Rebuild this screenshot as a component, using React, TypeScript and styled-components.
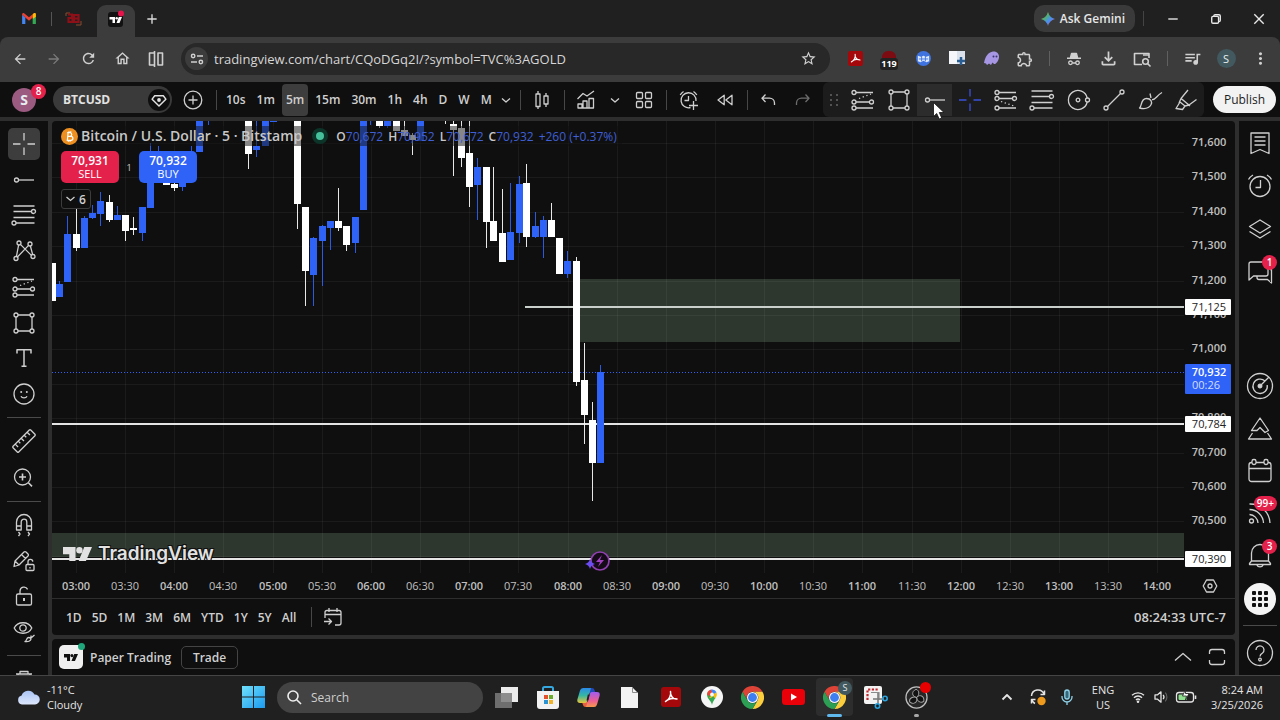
import React from "react";
import styled, { createGlobalStyle } from "styled-components";
import {
  MdAdd,
  MdArrowBack,
  MdArrowForward,
  MdMoreVert,
  MdOutlineExtension,
  MdOutlineFileDownload,
  MdOutlineHome,
  MdQueueMusic,
  MdRefresh,
  MdStarBorder,
} from "react-icons/md";

const UI = `"Open Sans", "Noto Sans", sans-serif`;
const PANEL = "#0f0f0f";
const GAP = "#2e2e2e";
const INK = "#cfcfcf";
const BLUE = "#2f62f6";
const RED = "#e3214b";

const Global = createGlobalStyle`
  * { box-sizing: border-box; }
  html, body { margin: 0; background: ${PANEL}; }
  body { font-family: ${UI}; font-size: 12px; color: ${INK}; }
  button, input { font: inherit; color: inherit; border: 0; padding: 0; margin: 0; background: none; outline: 0; }
  button { cursor: pointer; display: flex; align-items: center; justify-content: center; }
  svg { display: block; flex: none; }
`;

const Shell = styled.div`
  height: 100vh;
  display: flex;
  flex-direction: column;
  overflow: hidden;
`;

/* ---------- icon base: coordinates are measured from the centre ---------- */

const Stroke = styled.svg`
  fill: none;
  stroke: currentColor;
  stroke-width: 1.3;
  stroke-linecap: butt;
  stroke-linejoin: round;
  overflow: visible;
`;

function Icon({ size = 28, children }: { size?: number; children: React.ReactNode }) {
  return (
    <Stroke width={size} height={size} viewBox="-14 -14 28 28" aria-hidden="true">
      {children}
    </Stroke>
  );
}

const Node = ({ x, y }: { x: number; y: number }) => <circle cx={x} cy={y} r="2" />;

const CrossIcon = () => (
  <Icon>
    <path d="M0 -11V-3.5M0 3.5V11M-11 0H-3.5M3.5 0H11" />
  </Icon>
);
const RayIcon = () => (
  <Icon>
    <Node x={-7.5} y={0} />
    <path d="M-5.5 0H10" />
  </Icon>
);
const FibIcon = () => (
  <Icon>
    <path d="M-10.5 -9H10.5M-10.5 -3.5H7.5M-10.5 2.5H10.5M-8 8H10.5" />
    <Node x={9.5} y={-3.5} />
    <Node x={-10} y={8} />
  </Icon>
);
const PatternIcon = () => (
  <Icon>
    <path d="M-5.4 -6 -7.6 5.6M-3.6 -6.6 7.4 4.4M4.6 -5.6 -6.6 6M6.4 -5 8.6 3.4" />
    <Node x={-5} y={-8} />
    <Node x={6} y={-7} />
    <Node x={-8} y={7.5} />
    <Node x={9} y={5.5} />
  </Icon>
);
const LongIcon = () => (
  <Icon>
    <Node x={-9} y={-7.5} />
    <Node x={-9} y={2} />
    <Node x={8.5} y={2} />
    <Node x={-9} y={8} />
    <path d="M-7 -7.5H10M-7 2H6.5M-7 8H10" />
    <path d="M-4 -1.5 8 -6" strokeDasharray="1.3 2.6" />
  </Icon>
);
const ShortIcon = () => (
  <Icon>
    <Node x={-9} y={-7.5} />
    <Node x={-9} y={-1.5} />
    <Node x={8.5} y={-1.5} />
    <Node x={-9} y={8} />
    <path d="M-7 -7.5H10M-7 -1.5H6.5M-7 8H10" />
    <path d="M-5 1.5 8 6" strokeDasharray="1.3 2.6" />
  </Icon>
);
const RectIcon = () => (
  <Icon>
    <Node x={-8} y={-8} />
    <Node x={8} y={-8} />
    <Node x={-8} y={8} />
    <Node x={8} y={8} />
    <path d="M-6 -8H6M-6 8H6M-8 -6V6M8 -6V6" />
  </Icon>
);
const TextIcon = () => (
  <Icon>
    <path strokeWidth="1.5" d="M-7 -4.5V-8.3H7V-4.5M0 -8.3V8.3M-2.5 8.3H2.5" />
  </Icon>
);
const SmileIcon = () => (
  <Icon>
    <circle r="10" />
    <path d="M-3 2.2A3.2 2.6 0 0 0 3 2.2" />
    <circle cx="-2.8" cy="-2" r="1" fill="currentColor" stroke="none" />
    <circle cx="2.8" cy="-2" r="1" fill="currentColor" stroke="none" />
  </Icon>
);
const RulerIcon = () => (
  <Icon>
    <g transform="rotate(-45)">
      <rect x="-12.5" y="-4" width="25" height="8" rx="1" />
      <path d="M-8.4 -4V0M-4.2 -4V-1M0 -4V0M4.2 -4V-1M8.4 -4V0" />
    </g>
  </Icon>
);
const ZoomIcon = () => (
  <Icon>
    <circle cx="-1.5" cy="-1" r="8" />
    <path d="M-5 -1H2M-1.5 -4.5V2.5M4.4 4.8 8 8.4" strokeWidth="1.6" />
  </Icon>
);
const MagnetIcon = () => (
  <Icon>
    <path d="M-7.5 5V-3A7.5 7.5 0 0 1 7.5 -3V5H2.8V-3A2.8 2.8 0 0 0 -2.8 -3V5ZM-7.5 1H-2.8M2.8 1H7.5M-5.5 7 -4 9 -5.5 11M4 7 5.5 9 4 11" />
  </Icon>
);
const PencilLockIcon = () => (
  <Icon>
    <path d="M-10 5.5 -9 0 0 -9A1.4 1.4 0 0 1 2 -9L4 -7A1.4 1.4 0 0 1 4 -5L-5 4ZM-2.5 -6.5 1.5 -2.5M-9 0 -5 4" />
    <rect x="2" y="3.5" width="8" height="6" rx="1" />
    <path d="M4 3.5V1A2.4 2.4 0 0 1 8.8 .6M6 6V7.5" />
  </Icon>
);
const LockIcon = () => (
  <Icon>
    <rect x="-7.5" y="-2" width="15" height="11" rx="1.6" />
    <path d="M-4 -2V-5A4 4 0 0 1 3.6 -6.6" />
    <path d="M0 2V5" strokeWidth="2" />
  </Icon>
);
const EyeIcon = () => (
  <Icon>
    <path d="M-9.8 -4C-6.5 -11 4.5 -11 7.8 -4C4.5 3 -6.5 3 -9.8 -4Z" />
    <circle cx="-1" cy="-4" r="3.2" />
    <path d="M1 9.5C3 9.5 2 5.5 4.5 5.5C6.5 5.5 7.5 7 6.5 8.2C5.5 9.5 3 9.8 1 9.5ZM7 6 10.5 3M7 6V3.6" />
  </Icon>
);
const TrashIcon = () => (
  <Icon>
    <path d="M-8 -5H8M-4 -5V-7.5H4V-5M-6 -5 -5 9H5L6 -5" />
  </Icon>
);
const ChevronIcon = () => (
  <Icon>
    <path d="M-4 -1.5 0 2 4 -1.5" />
  </Icon>
);
const PlusCircleIcon = () => (
  <Icon>
    <circle r="8.8" />
    <path d="M-4.5 0H4.5M0 -4.5V4.5" />
  </Icon>
);
const CandlesIcon = () => (
  <Icon>
    <rect x="-6" y="-6" width="4" height="12.5" />
    <path d="M-4 -9V-6M-4 6.5V9" />
    <rect x="2" y="-4" width="4" height="8" />
    <path d="M4 -7V-4M4 4V7" />
  </Icon>
);
const IndicatorIcon = () => (
  <Icon>
    <path d="M-8.5 -1 -3 -6.5 1 -4 8 -9" />
    <path d="M-8 8V4H-4V8ZM-3 8V1H1V8ZM3 8V-1.5H7.5V8ZM-4 8H4" />
  </Icon>
);
const GridIcon = () => (
  <Icon>
    <rect x="-7.5" y="-7.5" width="6" height="6" rx="1" />
    <rect x="1.5" y="-7.5" width="6" height="6" rx="1" />
    <rect x="-7.5" y="1.5" width="6" height="6" rx="1" />
    <rect x="1.5" y="1.5" width="6" height="6" rx="1" />
  </Icon>
);
const AlertIcon = () => (
  <Icon>
    <path d="M1.5 7.5A7.5 7.5 0 1 1 7 1M-.5 -4V.5H-4.5M-8.8 -5A10 10 0 0 1 -5.5 -8.5M4.5 -8.5A10 10 0 0 1 7.8 -5M0 5.5H9M4.5 1V10" />
  </Icon>
);
const RewindIcon = () => (
  <Icon>
    <path d="M-.8 -4.8V4.8L-7 0ZM7 -4.8V4.8L.8 0Z" />
  </Icon>
);
const UndoIcon = ({ flip = false }: { flip?: boolean }) => (
  <Icon>
    <path
      transform={flip ? "scale(-1 1)" : undefined}
      d="M-2.5 -5.5 -6 -1.8 -2.5 2M-6 -1.8H1.5A5 5 0 0 1 6.5 3V5"
    />
  </Icon>
);
const GripIcon = () => (
  <Icon>
    <g fill="currentColor" stroke="none">
      {[-5, 0, 5].map((y) => (
        <React.Fragment key={y}>
          <circle cx="-3" cy={y} r=".9" />
          <circle cx="3" cy={y} r=".9" />
        </React.Fragment>
      ))}
    </g>
  </Icon>
);
const OrbitIcon = () => (
  <Icon>
    <path d="M9.2 -2A9.5 9.5 0 1 0 9.2 2" />
    <circle r="1.8" />
    <Node x={9.5} y={0} />
  </Icon>
);
const TrendIcon = () => (
  <Icon>
    <path d="M-6.5 6.5 6.5 -6.5" />
    <Node x={-8} y={8} />
    <Node x={8} y={-8} />
  </Icon>
);
const BrushIcon = () => (
  <Icon>
    <path d="M-10.5 8C-8 6.5 -9.5 -1.5 -3.5 -1.5C1 -1.5 2.5 2 1 4.8C-1 8.5 -6 9 -10.5 8ZM1 -2 0 -6.5M2 -.5C6 0 6 -4 12 -7.5" />
  </Icon>
);
const HighlighterIcon = () => (
  <Icon>
    <path d="M-10 8.5 -6 2 -1 6 -3.5 9.5ZM-7 3 -5 -1.5 3 5 -1 6M-5 -1.5 2 -10M3 5 10.5 -.5M-3 0 4 6" />
  </Icon>
);
const GoToIcon = () => (
  <Icon>
    <path d="M-8 1V-4.5A2 2 0 0 1 -6 -6.5H6A2 2 0 0 1 8 -4.5V6A2 2 0 0 1 6 8H2M-8 -2.5H8M-4 -9V-5M4 -9V-5M-9 4.5H-2M-4.5 1.5 -1.5 4.5 -4.5 7.5" />
  </Icon>
);
const HexIcon = () => (
  <Icon>
    <path d="M-6.8 0 -3.5 -6H3.5L6.8 0 3.5 6H-3.5Z" />
    <circle r="2" />
  </Icon>
);
const WideChevronIcon = () => (
  <Icon>
    <path d="M-8 3.5 0 -3.5 8 3.5" />
  </Icon>
);
const ExpandIcon = () => (
  <Icon>
    <path d="M-7.5 -3V-5A2.5 2.5 0 0 1 -5 -7.5H5A2.5 2.5 0 0 1 7.5 -5V-3M-7.5 3V5A2.5 2.5 0 0 0 -5 7.5H5A2.5 2.5 0 0 0 7.5 5V3" />
  </Icon>
);
const WatchlistIcon = () => (
  <Icon>
    <path d="M-9 -10H9V10.5L0 6.5 -9 10.5ZM-5.5 -6H5.5M-5.5 -2H5.5M-5.5 2H5.5" />
  </Icon>
);
const AlarmIcon = () => (
  <Icon>
    <circle r="10" cy=".5" />
    <path d="M.5 -6V1.5H-4.5M-11.5 -6.5A13 13 0 0 1 -7 -11M7 -11A13 13 0 0 1 11.5 -6.5" />
  </Icon>
);
const LayersIcon = () => (
  <Icon>
    <path d="M0 -9 10.5 -2.5 0 4 -10.5 -2.5ZM-10.5 2.5 0 9 10.5 2.5" />
  </Icon>
);
const ChatIcon = () => (
  <Icon>
    <path d="M-11 8V-8A2 2 0 0 1 -9 -10H6A2 2 0 0 1 8 -8V2A2 2 0 0 1 6 4H-6.5ZM10 -2.5H11.5V11L7.5 7.5H-1A2 2 0 0 1 -3 5.5V4" />
  </Icon>
);
const ScreenerIcon = () => (
  <Icon>
    <circle r="12.5" />
    <path d="M5 -5A7.2 7.2 0 1 0 7.2 -1M9 -9 0 0" />
    <circle r="1.8" fill="currentColor" />
  </Icon>
);
const PineIcon = () => (
  <Icon>
    <path d="M0 -11 8.5 1.5 5 3.5 0 -1.5 -3 1.5 -8.5 1.5ZM-7.5 4 -11.5 10H11.5L7.5 4" />
  </Icon>
);
const CalendarIcon = () => (
  <Icon>
    <path d="M-8 -8.5H-8.5A2.5 2.5 0 0 0 -11 -6V8A2.5 2.5 0 0 0 -8.5 10.5H8.5A2.5 2.5 0 0 0 11 8V-6A2.5 2.5 0 0 0 8.5 -8.5H8M-4 -8.5H4M-11 -2.5H11" />
    <rect x="-8" y="-11.5" width="4" height="5" rx="1.8" />
    <rect x="4" y="-11.5" width="4" height="5" rx="1.8" />
  </Icon>
);
const StreamIcon = () => (
  <Icon>
    <circle cx="-8.5" cy="7" r="2" />
    <path d="M-10.5 .5A9 9 0 0 1 -2 9M-10.5 -4.5A14 14 0 0 1 3.5 9M-10.5 -10A20 20 0 0 1 10 9" />
  </Icon>
);
const BellIcon = () => (
  <Icon>
    <path d="M-8.5 5V-3A8.5 8.5 0 0 1 8.5 -3V5M-8.5 5H8.5L10.5 7.5V8.5H-10.5V7.5ZM-3.5 8.5A3.8 3.8 0 0 0 3.5 8.5" />
  </Icon>
);
const HelpIcon = () => (
  <Icon>
    <circle r="12.5" />
    <path d="M-4 -3A4 4 0 1 1 2.5 0Q0 1.5 0 3.5" />
    <circle cy="6.5" r="1.3" />
  </Icon>
);

const TvMark = ({ size, color }: { size: number; color: string }) => (
  <svg width={size} height={size / 2} viewBox="0 0 30 15" aria-hidden="true">
    <path fill={color} d="M0 0H13V15H6.5V7.5H0ZM22 0H30L23.5 15H16Z" />
    <circle fill={color} cx="17" cy="3.4" r="3.3" />
  </svg>
);

/* ---------- browser tab strip ---------- */

const TabStrip = styled.header`
  flex: none;
  height: 37px;
  display: flex;
  align-items: center;
  padding-left: 12px;
  background: #202020;
`;
const Tab = styled.button<{ $active?: boolean }>`
  width: ${(p) => (p.$active ? 38 : 34)}px;
  height: ${(p) => (p.$active ? 32 : 28)}px;
  align-self: ${(p) => (p.$active ? "flex-end" : "center")};
  border-radius: ${(p) => (p.$active ? "9px 9px 0 0" : "8px")};
  background: ${(p) => (p.$active ? "#3c3c3c" : "none")};
  padding-bottom: ${(p) => (p.$active ? 5 : 0)}px;
`;
const Rule = styled.span<{ $h: number; $w?: number; $c?: string }>`
  flex: none;
  width: ${(p) => p.$w ?? 9}px;
  height: ${(p) => p.$h}px;
  background: linear-gradient(${(p) => p.$c ?? "#474747"}, ${(p) => p.$c ?? "#474747"}) center / 1px 100% no-repeat;
`;
const Grow = styled.span`
  flex: 1;
`;
const GeminiButton = styled.button`
  height: 27px;
  padding: 0 10px 0 7px;
  gap: 5px;
  border-radius: 10px;
  background: #3a3a3a;
  color: #e6e6e6;
  font-weight: 600;
`;
const WindowButton = styled.button`
  width: 43px;
  height: 37px;
  color: #e8e8e8;
`;

function BrowserTabs() {
  return (
    <TabStrip>
      <Tab aria-label="Gmail">
        <svg width="14" height="11" viewBox="0 0 15 12">
          <path d="M0 2V12H3.5V5Z" fill="#4285f4" />
          <path d="M15 2V12H11.5V5Z" fill="#34a853" />
          <path d="M0 1.5C0 0 1.5 -.5 2.5 .5L7.500 4.500 12.500 .5C13.500 -.5 15 0 15 1.500V2L7.500 8.500 0 2Z" fill="#ea4335" />
          <path d="M11.700 1.200 13 .2C14 -.4 15 .3 15 1.500V4.200L11.700 6.500Z" fill="#fbbc04" />
        </svg>
      </Tab>
      <Rule $h={14} $w={10} $c="#555" />
      <Tab aria-label="Pinned tab">
        <svg width="17" height="14" viewBox="0 0 17 14" fill="none">
          <path d="M1 4V1H5M16 9V13H11" stroke="#8a4a2c" />
          <path d="M3 2.500H7V6H3.500V10H7.500V6M9 2V10H13.500V3H9M9 6.500H13" stroke="#8d1018" strokeWidth="2.200" />
        </svg>
      </Tab>
      <Rule $h={1} $w={7} $c="transparent" />
      <Tab $active aria-label="TradingView tab">
        <svg width="18" height="18" viewBox="0 0 18 18">
          <rect x="1" y="2" width="15" height="15" rx="3" fill="#111" />
          <path fill="#fff" d="M2.500 7H8V13H5.500V9.500H2.500ZM11.800 7H15L12.500 13H9.500Z" />
          <circle cx="9.700" cy="8.200" r="1.200" fill="#fff" />
          <circle cx="14" cy="3.500" r="3" fill="#e6144b" />
        </svg>
      </Tab>
      <Tab aria-label="New tab">
        <MdAdd size={16} color="#ddd" />
      </Tab>
      <Grow />
      <GeminiButton>
        <svg width="14" height="14" viewBox="0 0 14 14" aria-hidden="true">
          <defs>
            <linearGradient id="gem" x1="0" y1="0" x2="1" y2="1">
              <stop offset="0" stopColor="#f4b63f" />
              <stop offset=".35" stopColor="#4fae74" />
              <stop offset=".6" stopColor="#4a8df8" />
              <stop offset="1" stopColor="#e05563" />
            </linearGradient>
          </defs>
          <path fill="url(#gem)" d="M7 0Q8.500 5.500 14 7 8.500 8.500 7 14 5.500 8.500 0 7 5.500 5.500 7 0Z" />
        </svg>
        Ask Gemini
      </GeminiButton>
      <Rule $h={15} $w={16} $c="#444" />
      <WindowButton aria-label="Minimize">
        <Icon size={24}><path strokeWidth="1.600" d="M-5.500 0H5.500" /></Icon>
      </WindowButton>
      <WindowButton aria-label="Restore">
        <Icon size={24}>
          <g strokeWidth="1.600">
            <rect x="-5" y="-3" width="8" height="8" rx="1.500" />
            <path d="M-2.500 -3V-3.500A1.500 1.500 0 0 1 -1 -5H3.500A1.500 1.500 0 0 1 5 -3.500V1.500A1.500 1.500 0 0 1 3.500 3H3" />
          </g>
        </Icon>
      </WindowButton>
      <WindowButton aria-label="Close">
        <Icon size={24}><path strokeWidth="1.600" d="M-5.500 -5.500 5.500 5.500M5.500 -5.500 -5.500 5.500" /></Icon>
      </WindowButton>
    </TabStrip>
  );
}

/* ---------- address bar ---------- */

const AddressRow = styled.div`
  flex: none;
  background: #202020;
`;
const AddressInner = styled.div`
  height: 45px;
  display: flex;
  align-items: center;
  padding: 0 3px 2px;
  border-radius: 8px 8px 0 0;
  background: #3c3c3c;
`;
const NavButton = styled.button<{ $dim?: boolean }>`
  flex: none;
  width: 34px;
  height: 34px;
  color: ${(p) => (p.$dim ? "#7b7b7b" : "#d0d0d0")};
`;
const Omnibox = styled.div`
  flex: 1;
  height: 32px;
  margin: 0 8px;
  padding: 0 5px 0 4px;
  display: flex;
  align-items: center;
  border-radius: 16px;
  background: #282828;
`;
const SiteInfo = styled.button`
  width: 23px;
  height: 23px;
  border-radius: 50%;
  background: #3c3c3c;
`;
const UrlInput = styled.input`
  flex: 1;
  min-width: 0;
  margin-left: 6px;
  font-size: 13px;
  color: #d6d6d6;
`;
const Avatar = styled.span<{ $size: number; $bg: string }>`
  width: ${(p) => p.$size}px;
  height: ${(p) => p.$size}px;
  border-radius: 50%;
  display: flex;
  align-items: center;
  justify-content: center;
  background: ${(p) => p.$bg};
  color: #e6eef0;
  font-size: ${(p) => (p.$size > 20 ? 14 : 11)}px;
  font-weight: ${(p) => (p.$size > 20 ? 700 : 400)};
`;
const BlockerBadge = styled.span`
  margin-top: 10px;
  padding: 0 1px;
  border-radius: 3px;
  background: #222;
  color: #fff;
  font-size: 9px;
  line-height: 12px;
  font-weight: 700;
`;
const BlockerCap = styled.span`
  position: absolute;
  top: 9px;
  left: 10px;
  width: 14px;
  height: 7px;
  border-radius: 6px 6px 0 0;
  background: #7d0b12;
`;
const BlockerButton = styled(NavButton)`
  position: relative;
`;

const PdfGlyph = ({ size }: { size: number }) => (
  <svg width={size} height={size} viewBox="0 0 20 20" aria-hidden="true">
    <rect width="20" height="20" rx="3" fill="#a5080b" />
    <path
      d="M4.500 14.500C8 13 10.500 8 9.500 4.500C9 8.500 12 12.500 16 12C12 10.500 7 12 4.500 14.500Z"
      fill="none"
      stroke="#fff"
      strokeWidth="1.500"
      strokeLinejoin="round"
    />
  </svg>
);

function AddressBar() {
  return (
    <AddressRow>
      <AddressInner>
        <NavButton aria-label="Back"><MdArrowBack size={16} /></NavButton>
        <NavButton $dim aria-label="Forward"><MdArrowForward size={16} /></NavButton>
        <NavButton aria-label="Reload"><MdRefresh size={17} /></NavButton>
        <NavButton aria-label="Home"><MdOutlineHome size={17} /></NavButton>
        <NavButton aria-label="Split view">
          <Icon><path strokeWidth="1.600" d="M-2 -6H-6.500V6H-2M2 -6H6.500V6H2ZM-1.500 -8V8" /></Icon>
        </NavButton>
        <Omnibox>
          <SiteInfo aria-label="Site information">
            <Icon size={24}>
              <g strokeWidth="1.700">
                <circle cx="-4.500" cy="-3.500" r="2" />
                <path d="M0 -3.500H7M-7 3.500H0" />
                <circle cx="4.500" cy="3.500" r="2" />
              </g>
            </Icon>
          </SiteInfo>
          <UrlInput aria-label="Address" defaultValue="tradingview.com/chart/CQoDGq2I/?symbol=TVC%3AGOLD" />
          <NavButton aria-label="Bookmark"><MdStarBorder size={17} /></NavButton>
        </Omnibox>
        <NavButton aria-label="Acrobat"><PdfGlyph size={15} /></NavButton>
        <BlockerButton aria-label="Blocker">
          <BlockerCap />
          <BlockerBadge>119</BlockerBadge>
        </BlockerButton>
        <NavButton aria-label="Blue extension">
          <svg width="15" height="15" viewBox="0 0 16 16">
            <circle cx="8" cy="8" r="8" fill="#3f74e0" />
            <path d="M2 5 5 6 8 5 11 6 14 5V11L11 12 8 10.500 5 12 2 11Z" fill="#dfe9ff" />
            <path d="M3 8.500H13M6 5V11M10 5V11" stroke="#3f74e0" />
          </svg>
        </NavButton>
        <NavButton aria-label="Capture">
          <svg width="17" height="15" viewBox="0 0 17 15">
            <rect width="16" height="13" fill="#f4f6fa" />
            <path d="M8 0H16V13H8Z" fill="#dbe2ec" />
            <path d="M12 6V14M8 10H16" stroke="#2b5f93" strokeWidth="2.500" />
          </svg>
        </NavButton>
        <NavButton aria-label="Ghost">
          <svg width="17" height="15" viewBox="0 0 17 15">
            <path d="M1 12C2 6 5 1 10 .5C14 .2 16.500 3 16 6.500C15.500 10 13 13.500 11 13L9.500 11.500 8 14 6 12.500 4 14 3 12.500Z" fill="#a796e4" />
            <circle cx="10.500" cy="5.500" r="1" fill="#3c3470" />
            <circle cx="13.500" cy="5.500" r="1" fill="#3c3470" />
          </svg>
        </NavButton>
        <NavButton aria-label="Extensions"><MdOutlineExtension size={18} /></NavButton>
        <Rule $h={15} $w={15} $c="#606060" />
        <NavButton aria-label="Incognito">
          <Icon>
            <path fill="currentColor" d="M-3.500 -1.500 -2.500 -5.500H2.500L3.500 -1.500Z" />
            <path strokeWidth="1.600" d="M-7 -.8H7M-1.500 4H1.500" />
            <circle cx="-3.500" cy="3.800" r="1.800" />
            <circle cx="3.500" cy="3.800" r="1.800" />
          </Icon>
        </NavButton>
        <NavButton aria-label="Downloads"><MdOutlineFileDownload size={21} /></NavButton>
        <NavButton aria-label="Page search">
          <Icon>
            <g strokeWidth="1.600">
              <path d="M0 5.500H-7.500V-5.500H7V-1" />
              <circle cx="3.500" cy="2.500" r="2.800" />
              <path d="M5.500 4.500 8.500 7.500M1 -4H7" />
            </g>
          </Icon>
        </NavButton>
        <Rule $h={15} $w={16} $c="#606060" />
        <NavButton aria-label="Media"><MdQueueMusic size={19} /></NavButton>
        <NavButton aria-label="Profile"><Avatar $size={19} $bg="#41595f">S</Avatar></NavButton>
        <NavButton aria-label="Menu"><MdMoreVert size={19} /></NavButton>
      </AddressInner>
    </AddressRow>
  );
}

/* ---------- chart toolbar ---------- */

const Toolbar = styled.div`
  flex: none;
  height: 35px;
  display: flex;
  align-items: center;
  padding-left: 12px;
  background: ${PANEL};
`;
const UserButton = styled.button`
  position: relative;
  flex: none;
  margin-right: 17px;
`;
const Badge = styled.span<{ $top: number; $right: number }>`
  position: absolute;
  top: ${(p) => p.$top}px;
  right: ${(p) => p.$right}px;
  min-width: 15px;
  height: 15px;
  padding: 0 3px;
  border-radius: 8px;
  background: ${RED};
  color: #fff;
  font-size: 10px;
  line-height: 15px;
  font-weight: 600;
  text-align: center;
`;
const SymbolButton = styled.button`
  flex: none;
  width: 119px;
  height: 27px;
  margin-right: 2px;
  padding: 0 2px 0 10px;
  justify-content: space-between;
  border-radius: 14px;
  background: #3a3a3a;
  color: #e2e2e2;
  font-weight: 700;
`;
const SymbolMark = styled.span`
  width: 22px;
  height: 22px;
  border-radius: 50%;
  display: flex;
  align-items: center;
  justify-content: center;
  background: ${PANEL};
`;
const Tool = styled.button<{ $w: number; $dim?: boolean }>`
  flex: none;
  width: ${(p) => p.$w}px;
  height: 32px;
  color: ${(p) => (p.$dim ? "#6d6d6d" : INK)};
`;
const Frames = styled.div`
  display: flex;
  gap: 3px;
  margin-left: 1px;
`;
const FrameButton = styled.button<{ $active?: boolean }>`
  height: 32px;
  padding: 0 4px;
  border-radius: 4px;
  background: ${(p) => (p.$active ? "#3d3d3d" : "none")};
  font-weight: 600;
`;
const Favourites = styled.div`
  flex: 1;
  height: 35px;
  margin-left: 2px;
  display: flex;
  align-items: center;
  border-radius: 6px;
  background: #1c1c1c;
`;
const FavButton = styled.button<{ $active?: boolean; $color?: string }>`
  position: relative;
  flex: 1;
  height: 32px;
  background: ${(p) => (p.$active ? "#2c2c2c" : "none")};
  color: ${(p) => p.$color ?? INK};
`;
const Pointer = styled.svg`
  position: absolute;
  z-index: 5;
  left: 16px;
  top: 18px;
`;
const PublishButton = styled.button`
  flex: none;
  height: 27px;
  margin: 0 4px 0 9px;
  padding: 0 11px;
  border-radius: 14px;
  background: #f2f2f2;
  color: #1c1c1c;
  font-weight: 500;
`;

const frames = ["10s", "1m", "5m", "15m", "30m", "1h", "4h", "D", "W", "M"];

function ChartToolbar() {
  return (
    <Toolbar>
      <UserButton aria-label="Account">
        <Avatar $size={24} $bg="#9b5a80">S</Avatar>
        <Badge $top={-4} $right={-10}>8</Badge>
      </UserButton>
      <SymbolButton>
        BTCUSD
        <SymbolMark>
          <Icon size={24}>
            <path strokeWidth="1.700" d="M-5 -5H5L8 -1 0 7 -8 -1Z" />
            <circle cy="0" r="2.200" fill="currentColor" stroke="none" />
          </Icon>
        </SymbolMark>
      </SymbolButton>
      <Tool $w={38} aria-label="Compare"><PlusCircleIcon /></Tool>
      <Rule $h={20} />
      <Frames>
        {frames.map((f) => (
          <FrameButton key={f} $active={f === "5m"}>{f}</FrameButton>
        ))}
      </Frames>
      <Tool $w={20} aria-label="More intervals"><ChevronIcon /></Tool>
      <Rule $h={20} />
      <Tool $w={35} aria-label="Chart type"><CandlesIcon /></Tool>
      <Rule $h={20} />
      <Tool $w={35} aria-label="Indicators"><IndicatorIcon /></Tool>
      <Tool $w={22} aria-label="Indicator templates"><ChevronIcon /></Tool>
      <Tool $w={36} aria-label="Layouts"><GridIcon /></Tool>
      <Rule $h={20} />
      <Tool $w={36} aria-label="Create alert"><AlertIcon /></Tool>
      <Tool $w={36} aria-label="Replay"><RewindIcon /></Tool>
      <Rule $h={20} />
      <Tool $w={33} aria-label="Undo"><UndoIcon /></Tool>
      <Tool $w={36} $dim aria-label="Redo"><UndoIcon flip /></Tool>
      <Favourites>
        <Tool $w={22} $dim aria-label="Move toolbar"><GripIcon /></Tool>
        <FavButton aria-label="Long position"><LongIcon /></FavButton>
        <FavButton aria-label="Rectangle"><RectIcon /></FavButton>
        <FavButton $active aria-label="Horizontal ray">
          <RayIcon />
          <Pointer width="12" height="18" viewBox="0 0 12 18" aria-hidden="true">
            <path d="M.5 .5V14.500L3.700 11.500 6.200 17 8.700 16 6.300 10.500H11Z" fill="#fff" stroke="#111" strokeWidth=".8" />
          </Pointer>
        </FavButton>
        <FavButton $color="#3a50d8" aria-label="Cross line"><CrossIcon /></FavButton>
        <FavButton aria-label="Short position"><ShortIcon /></FavButton>
        <FavButton aria-label="Fib retracement"><FibIcon /></FavButton>
        <FavButton aria-label="Circle"><OrbitIcon /></FavButton>
        <FavButton aria-label="Trend line"><TrendIcon /></FavButton>
        <FavButton aria-label="Brush"><BrushIcon /></FavButton>
        <FavButton aria-label="Highlighter"><HighlighterIcon /></FavButton>
      </Favourites>
      <PublishButton>Publish</PublishButton>
    </Toolbar>
  );
}

/* ---------- side rails ---------- */

const Workspace = styled.main`
  flex: 1;
  min-height: 0;
  display: flex;
  gap: 4px;
  padding-top: 4px;
  background: ${GAP};
`;
const Rail = styled.nav<{ $w: number }>`
  flex: none;
  width: ${(p) => p.$w}px;
  display: flex;
  flex-direction: column;
  overflow: hidden;
  background: ${PANEL};
`;
const RailGroup = styled.div<{ $h: number }>`
  flex: none;
  height: ${(p) => p.$h}px;
  display: flex;
  flex-direction: column;
`;
const RailSpace = styled.div<{ $h: number }>`
  flex: none;
  height: ${(p) => p.$h}px;
`;
const RailButton = styled.button`
  flex: 1;
  position: relative;
  width: 100%;
`;
const RailTool = styled.span<{ $active?: boolean }>`
  width: 32px;
  height: 32px;
  display: flex;
  align-items: center;
  justify-content: center;
  border-radius: 5px;
  background: ${(p) => (p.$active ? "#3d3d3d" : "none")};
`;
const RailRule = styled.hr`
  flex: none;
  width: 34px;
  height: 1px;
  margin: 5px auto;
  border: 0;
  background: #4a4a4a;
`;
const AppsDisc = styled.span`
  width: 32px;
  height: 32px;
  border-radius: 50%;
  display: flex;
  align-items: center;
  justify-content: center;
  background: #f4f4f4;
  color: #111;
`;

const drawTools: [string, () => React.ReactElement][] = [
  ["Cross", CrossIcon],
  ["Lines", RayIcon],
  ["Fib tools", FibIcon],
  ["Patterns", PatternIcon],
  ["Projection", LongIcon],
  ["Shapes", RectIcon],
  ["Text", TextIcon],
  ["Icons", SmileIcon],
];
const measureTools: [string, () => React.ReactElement][] = [
  ["Measure", RulerIcon],
  ["Zoom in", ZoomIcon],
];
const lockTools: [string, () => React.ReactElement][] = [
  ["Magnet", MagnetIcon],
  ["Stay in drawing mode", PencilLockIcon],
  ["Lock drawings", LockIcon],
  ["Hide drawings", EyeIcon],
];

function ToolGroup({ items, height }: { items: [string, () => React.ReactElement][]; height: number }) {
  return (
    <RailGroup $h={height}>
      {items.map(([label, Glyph]) => (
        <RailButton key={label} aria-label={label}>
          <RailTool $active={label === "Cross"}><Glyph /></RailTool>
        </RailButton>
      ))}
    </RailGroup>
  );
}

function DrawingRail() {
  return (
    <Rail $w={48}>
      <RailSpace $h={5} />
      <ToolGroup items={drawTools} height={286} />
      <RailRule />
      <ToolGroup items={measureTools} height={73} />
      <RailRule />
      <ToolGroup items={lockTools} height={143} />
      <RailRule />
      <ToolGroup items={[["Remove objects", TrashIcon]]} height={36} />
    </Rail>
  );
}

function WidgetRail() {
  return (
    <Rail $w={41}>
      <RailGroup $h={172}>
        <RailButton aria-label="Watchlist"><WatchlistIcon /></RailButton>
        <RailButton aria-label="Alerts"><AlarmIcon /></RailButton>
        <RailButton aria-label="Object tree"><LayersIcon /></RailButton>
        <RailButton aria-label="Chats"><ChatIcon /><Badge $top={5} $right={3}>1</Badge></RailButton>
      </RailGroup>
      <Grow />
      <RailGroup $h={255}>
        <RailButton aria-label="Screeners"><ScreenerIcon /></RailButton>
        <RailButton aria-label="Pine editor"><PineIcon /></RailButton>
        <RailButton aria-label="Calendars"><CalendarIcon /></RailButton>
        <RailButton aria-label="Streams"><StreamIcon /><Badge $top={3} $right={3}>99+</Badge></RailButton>
        <RailButton aria-label="Notifications"><BellIcon /><Badge $top={4} $right={3}>3</Badge></RailButton>
        <RailButton aria-label="Products">
          <AppsDisc>
            <svg width="18" height="18" viewBox="0 0 18 18" aria-hidden="true">
              {[1, 7, 13].map((y) =>
                [1, 7, 13].map((x) => <rect key={`${x}-${y}`} x={x} y={y} width="4" height="4" rx="1" fill="#111" />)
              )}
            </svg>
          </AppsDisc>
        </RailButton>
      </RailGroup>
      <RailRule />
      <RailGroup $h={44}>
        <RailButton aria-label="Help"><HelpIcon /></RailButton>
      </RailGroup>
    </Rail>
  );
}

/* ---------- chart ---------- */

const Center = styled.section`
  flex: 1;
  min-width: 0;
  display: flex;
  flex-direction: column;
  gap: 4px;
`;
const ChartCard = styled.div`
  flex: 1;
  min-height: 0;
  display: flex;
  flex-direction: column;
  border-radius: 4px;
  background: ${PANEL};
`;
const PaneRow = styled.div`
  flex: 1;
  min-height: 0;
  display: flex;
`;
const Pane = styled.div`
  position: relative;
  flex: 1;
  min-width: 0;
  overflow: hidden;
`;
const AxisRow = styled.div`
  flex: none;
  height: 26px;
  display: flex;
  border-bottom: 1px solid ${GAP};
`;
const AxisSettings = styled.button`
  width: 51px;
`;
const TimeSvg = styled.svg`
  flex: 1;
  min-width: 0;
  overflow: hidden;
`;
const AxisText = styled.text<{ $tone?: string; $weight?: number }>`
  font-family: ${UI};
  font-size: 11px;
  font-weight: ${(p) => p.$weight ?? 400};
  fill: ${(p) => p.$tone ?? "#c0c0c0"};
  text-anchor: middle;
`;

/* x, high, body top, body bottom, low, u = rising / d = falling; y from the top of the pane */
type Candle = [number, number, number, number, number, "u" | "d"];
const candles: Candle[] = [
  [0, 142, 142, 180, 180, "d"],
  [7, 160, 163, 176, 176, "u"],
  [15, 95, 113, 161, 161, "u"],
  [24, 79, 113, 127, 130, "d"],
  [32, 95, 97, 127, 127, "u"],
  [40, 84, 92, 97, 98, "u"],
  [48, 71, 80, 93, 105, "u"],
  [57, 74, 81, 99, 101, "d"],
  [65, 85, 94, 99, 99, "u"],
  [73, 94, 94, 110, 120, "d"],
  [81, 96, 107, 109, 114, "d"],
  [90, 86, 86, 112, 120, "u"],
  [98, 22, 40, 87, 87, "u"],
  [106, 25, 40, 58, 60, "u"],
  [114, 40, 42, 64, 64, "d"],
  [122, 60, 63, 67, 70, "d"],
  [130, 40, 50, 66, 70, "u"],
  [139, 25, 34, 50, 50, "u"],
  [147, -5, -5, 31, 31, "u"],
  [156, -5, -5, -2, 4, "u"],
  [196, -5, -5, 33, 48, "d"],
  [204, -5, 25, 29, 36, "u"],
  [213, -5, -5, 25, 25, "u"],
  [221, -5, -5, 1, 1, "u"],
  [245, -5, -5, 83, 108, "d"],
  [253, 86, 86, 150, 185, "d"],
  [261, 116, 117, 154, 185, "u"],
  [270, 104, 105, 120, 165, "u"],
  [278, 100, 100, 107, 129, "u"],
  [286, 67, 100, 107, 110, "d"],
  [294, 105, 105, 124, 130, "d"],
  [303, 96, 96, 122, 132, "u"],
  [311, -5, -5, 89, 89, "u"],
  [318, -5, -5, -2, 4, "u"],
  [327, -5, -5, 5, 7, "d"],
  [335, -5, -5, 5, 7, "u"],
  [344, -5, -5, 10, 10, "d"],
  [352, -5, 9, 15, 15, "d"],
  [360, 12, 14, 19, 34, "d"],
  [368, -5, -5, 20, 20, "u"],
  [393, -5, -5, -2, 3, "d"],
  [401, -5, 3, 9, 55, "d"],
  [409, -5, 7, 37, 46, "d"],
  [417, -5, 32, 66, 86, "d"],
  [425, 37, 46, 64, 99, "u"],
  [434, 46, 46, 101, 127, "d"],
  [441, 46, 100, 120, 120, "d"],
  [450, 68, 112, 141, 141, "d"],
  [458, 62, 111, 139, 139, "u"],
  [467, 55, 63, 112, 122, "u"],
  [474, 43, 62, 116, 126, "d"],
  [483, 91, 105, 116, 117, "u"],
  [491, 95, 99, 116, 137, "u"],
  [499, 82, 99, 116, 116, "d"],
  [507, 117, 117, 153, 153, "d"],
  [515, 130, 140, 153, 157, "u"],
  [524, 136, 140, 261, 265, "d"],
  [532, 222, 259, 294, 323, "d"],
  [540, 281, 299, 342, 380, "d"],
  [548, 244, 251, 342, 342, "u"],
];

const priceRows = [
  "71,600", "71,500", "71,400", "71,300", "71,200", "71,100", "71,000",
  "70,900", "70,800", "70,700", "70,600", "70,500", "70,400",
];
const rowY = (i: number) => Math.round(22 + 34.4 * i);
const colX = (i: number) => Math.round(24 + 49.15 * i);
const timeLabels = Array.from({ length: 23 }, (_, i) => {
  const hour = String(3 + Math.floor(i / 2)).padStart(2, "0");
  return `${hour}:${i % 2 ? "30" : "00"}`;
});

function Plot() {
  return (
    <svg width="100%" height="100%" role="img" aria-label="BTCUSD candlestick chart">
      <rect x="527" y="158" width="381" height="63" fill="#2d372e" />
      <rect x="0" y="412" width="100%" height="24" fill="#2d372e" />
      <g fill="#fff" fillOpacity=".05">
        {priceRows.map((p, i) => <rect key={p} x="0" y={rowY(i)} width="100%" height="1" />)}
        {timeLabels.map((t, i) => <rect key={t} x={colX(i)} y="0" width="1" height="100%" />)}
      </g>
      <rect x="473" y="185" width="100%" height="2" fill="#c9cfca" />
      <rect x="0" y="302" width="100%" height="2" fill="#e4e4e4" />
      <rect x="0" y="437" width="100%" height="2" fill="#e4e4e4" />
      <path d="M0 251.500H4000" stroke={BLUE} strokeDasharray="1 2" />
      {candles.map(([x, high, top, bottom, low, dir]) => (
        <g key={x} fill={dir === "u" ? BLUE : "#fff"}>
          <rect x={x} y={high} width="1" height={low - high} fillOpacity=".9" />
          <rect x={x - 3} y={top} width="7" height={bottom - top} />
        </g>
      ))}
      <g transform="translate(548 440)">
        <circle r="9" fill="#150a18" stroke="#8f3fae" strokeWidth="1.700" />
        <path d="M2 -6 -4 1H0L-2 6 4 -1H0Z" fill="#a23fc0" />
        <path d="M-10 -2Q-9 2 -5 3 -9 4 -10 8 -11 4 -15 3 -11 2 -10 -2Z" fill="#6c4df2" />
      </g>
    </svg>
  );
}

const Overlay = styled.div`
  position: absolute;
  left: 9px;
  top: 5px;
`;
const Legend = styled.div`
  display: flex;
  align-items: center;
  height: 20px;
  background: rgba(15, 15, 15, 0.5);
`;
const SymbolName = styled.h1`
  margin: 0 8px 0 3px;
  font-size: 14px;
  line-height: 20px;
  font-weight: 600;
  color: #c8c8c8;
  white-space: nowrap;
`;
const LiveDot = styled.span`
  width: 8px;
  height: 8px;
  margin: 0 12px 0 6px;
  border-radius: 50%;
  background: #45c09a;
  box-shadow: 0 0 0 4px #0c3429;
`;
const Ohlc = styled.span`
  margin-right: 5px;
  color: #3f5fd6;
  font-weight: 500;
  white-space: nowrap;
  b {
    font-weight: 600;
    color: #c8c8c8;
  }
`;
const OrderRow = styled.div`
  display: flex;
  align-items: center;
  margin-top: 5px;
`;
const OrderButton = styled.button<{ $bg: string }>`
  flex-direction: column;
  width: 58px;
  height: 32px;
  border-radius: 5px;
  background: ${(p) => p.$bg};
  color: #fff;
  font-size: 11px;
  line-height: 13px;
  b {
    font-size: 12px;
    font-weight: 600;
  }
`;
const Spread = styled.span`
  width: 20px;
  text-align: center;
  font-size: 9px;
`;
const CollapseButton = styled.button`
  width: 30px;
  height: 20px;
  margin-top: 6px;
  gap: 4px;
  border: 1px solid #3c3c3c;
  border-radius: 3px;
  background: ${PANEL};
  font-weight: 600;
`;
const Watermark = styled.a`
  position: absolute;
  left: 11px;
  bottom: 6px;
  display: flex;
  align-items: center;
  gap: 6px;
  color: #e2e2e2;
  font-family: Inter, sans-serif;
  font-size: 19px;
  line-height: 26px;
  font-weight: 600;
  text-decoration: none;
  text-shadow: 1px 1px 0 #111, -1px -1px 0 #111, 1px -1px 0 #111, -1px 1px 0 #111;
`;
const RangeBar = styled.div`
  flex: none;
  height: 36px;
  display: flex;
  align-items: center;
  padding: 0 4px 0 9px;
  font-weight: 600;
`;
const RangeButton = styled.button`
  height: 26px;
  padding: 0 5px;
  white-space: nowrap;
`;
const ClockButton = styled(RangeButton)`
  font-size: 13px;
`;
const RangeEnd = styled.span`
  display: flex;
  align-items: center;
  margin-left: 6px;
`;
const AccountPanel = styled.div`
  flex: none;
  height: 36px;
  display: flex;
  align-items: center;
  padding: 0 4px 0 7px;
  border-radius: 4px 4px 0 0;
  background: ${PANEL};
`;
const BrokerMark = styled.span`
  position: relative;
  width: 24px;
  height: 24px;
  border-radius: 5px;
  display: flex;
  align-items: center;
  justify-content: center;
  background: #f0f0f0;
`;
const OnlineDot = styled.span`
  position: absolute;
  top: -2px;
  right: -2px;
  width: 7px;
  height: 7px;
  border-radius: 50%;
  background: #1fa67a;
`;
const BrokerName = styled.span`
  margin: 0 10px 0 7px;
  font-weight: 600;
`;
const TradeButton = styled.button`
  width: 57px;
  height: 23px;
  border: 1px solid #444;
  border-radius: 5px;
  font-weight: 600;
`;

const ohlc: [string, string][] = [["O", "70,672"], ["H", "70,952"], ["L", "70,672"], ["C", "70,932"]];
const ranges = ["1D", "5D", "1M", "3M", "6M", "YTD", "1Y", "5Y", "All"];
const tags: [number, string][] = [[178, "71,125"], [295, "70,784"], [430, "70,390"]];

function ChartArea() {
  return (
    <Center>
      <ChartCard>
        <PaneRow>
          <Pane>
            <Plot />
            <Overlay>
              <Legend>
                <svg width="17" height="17" viewBox="0 0 18 18" aria-hidden="true">
                  <circle cx="9" cy="9" r="9" fill="#ee9021" />
                  <path
                    d="M6.500 5H10A2 2 0 0 1 10 8.800H7M7 8.800H10.500A2.100 2.100 0 0 1 10.500 13H6M7.500 5 6.800 13M8.500 3.500V5M10.300 3.500V5M7.800 13V14.500M9.600 13V14.500"
                    fill="none"
                    stroke="#fff"
                    strokeWidth="1.300"
                  />
                </svg>
                <SymbolName>Bitcoin / U.S. Dollar · 5 · Bitstamp</SymbolName>
                <LiveDot />
                {ohlc.map(([k, v]) => <Ohlc key={k}><b>{k}</b>{v}</Ohlc>)}
                <Ohlc>+260 (+0.37%)</Ohlc>
              </Legend>
              <OrderRow>
                <OrderButton $bg={RED}><b>70,931</b>SELL</OrderButton>
                <Spread>1</Spread>
                <OrderButton $bg={BLUE}><b>70,932</b>BUY</OrderButton>
              </OrderRow>
              <CollapseButton>
                <svg width="9" height="6" viewBox="0 0 9 6" fill="none" stroke="currentColor" strokeWidth="1.300" aria-hidden="true">
                  <path d="M.5 1 4.500 4.500 8.500 1" />
                </svg>
                6
              </CollapseButton>
            </Overlay>
            <Watermark href="#tradingview">
              <TvMark size={29} color="#e2e2e2" />
              TradingView
            </Watermark>
          </Pane>
          <svg width="51" height="100%" aria-label="Price scale">
            {priceRows.map((p, i) => p !== "70,900" && (
              <AxisText key={p} x="25" y={rowY(i) + 3} $weight={600}>{p}</AxisText>
            ))}
            {tags.map(([y, label]) => (
              <g key={label}>
                <rect x="1" y={y} width="46" height="16" rx="1" fill="#fff" />
                <AxisText x="25" y={y + 12} $tone="#222" $weight={500}>{label}</AxisText>
              </g>
            ))}
            <rect x="1" y="243" width="46" height="30" rx="1" fill={BLUE} />
            <AxisText x="25" y="255" $tone="#fff" $weight={600}>70,932</AxisText>
            <AxisText x="22" y="268" $tone="#d3deff" $weight={500}>00:26</AxisText>
          </svg>
        </PaneRow>
        <AxisRow>
          <TimeSvg height="25" aria-label="Time scale">
            {timeLabels.map((t, i) => (
              <AxisText key={t} x={colX(i)} y="17" $weight={i % 2 ? 500 : 600}>{t}</AxisText>
            ))}
          </TimeSvg>
          <AxisSettings aria-label="Scale settings"><HexIcon /></AxisSettings>
        </AxisRow>
        <RangeBar>
          {ranges.map((r) => <RangeButton key={r}>{r}</RangeButton>)}
          <RangeEnd>
            <Rule $h={20} />
            <Tool $w={34} aria-label="Go to date"><GoToIcon /></Tool>
          </RangeEnd>
          <Grow />
          <ClockButton>08:24:33 UTC-7</ClockButton>
        </RangeBar>
      </ChartCard>
      <AccountPanel>
        <BrokerMark><TvMark size={14} color="#111" /><OnlineDot /></BrokerMark>
        <BrokerName>Paper Trading</BrokerName>
        <TradeButton>Trade</TradeButton>
        <Grow />
        <Tool $w={40} aria-label="Open panel"><WideChevronIcon /></Tool>
        <Tool $w={28} aria-label="Maximize panel"><ExpandIcon /></Tool>
      </AccountPanel>
    </Center>
  );
}

/* ---------- desktop taskbar ---------- */

const Taskbar = styled.footer`
  flex: none;
  height: 45px;
  display: flex;
  align-items: center;
  padding: 0 17px 2px;
  border-top: 1px solid #454545;
  background: #202020;
  color: #e4e4e4;
  font-size: 11px;
  font-weight: 500;
  line-height: 15px;
`;
const Weather = styled.button`
  width: 216px;
  gap: 7px;
  justify-content: flex-start;
  text-align: left;
  line-height: 15px;
`;
const StartButton = styled.button`
  width: 40px;
  height: 40px;
`;
const SearchBox = styled.label`
  width: 206px;
  height: 31px;
  margin: 0 3px 0 4px;
  padding: 0 10px;
  display: flex;
  align-items: center;
  gap: 9px;
  border-radius: 16px;
  background: #434343;
  input {
    width: 100%;
    min-width: 0;
    font-size: 12px;
  }
  input::placeholder {
    color: #cfcfcf;
    opacity: 1;
  }
`;
const AppButton = styled.button<{ $open?: boolean }>`
  position: relative;
  width: 37px;
  height: 38px;
  margin: 0 2px;
  border-radius: 4px;
  background: ${(p) => (p.$open ? "#2d2d2d" : "none")};
`;
const AppMark = styled.span<{ $w: number; $c: string }>`
  position: absolute;
  bottom: -1px;
  left: 0;
  right: 0;
  width: ${(p) => p.$w}px;
  margin: 0 auto;
  height: 3px;
  border-radius: 2px;
  background: ${(p) => p.$c};
`;
const ProfileDot = styled.span`
  position: absolute;
  top: 3px;
  right: 1px;
  width: 14px;
  height: 14px;
  border-radius: 50%;
  background: #41595f;
  font-size: 9px;
  line-height: 14px;
`;
const AlertDot = styled.span`
  position: absolute;
  top: 4px;
  right: 4px;
  width: 11px;
  height: 11px;
  border-radius: 50%;
  background: #e80000;
`;
const TrayButton = styled.button<{ $w: number; $right?: boolean }>`
  flex-direction: column;
  align-items: ${(p) => (p.$right ? "flex-end" : "center")};
  width: ${(p) => p.$w}px;
  height: 40px;
  line-height: 15px;
`;

const ChromeLogo = () => (
  <svg width="23" height="23" viewBox="0 0 24 24" aria-hidden="true">
    <path fill="#dd4437" d="M12 6H22.400A12 12 0 0 0 1.600 6L6.800 15A6 6 0 0 1 12 6Z" />
    <path fill="#fccd3c" d="M22.400 6H12A6 6 0 0 1 17.200 15L12 24A12 12 0 0 0 22.400 6Z" />
    <path fill="#2c9f54" d="M1.600 6A12 12 0 0 0 12 24L17.200 15A6 6 0 0 1 6.800 15Z" />
    <circle cx="12" cy="12" r="5.800" fill="#f6f6f6" />
    <circle cx="12" cy="12" r="4.600" fill="#3d7ff0" />
  </svg>
);

function DesktopBar() {
  return (
    <Taskbar>
      <Weather>
        <svg width="23" height="16" viewBox="0 0 23 16" aria-hidden="true">
          <defs>
            <linearGradient id="sky" x1="0" y1="0" x2="0" y2="1">
              <stop offset="0" stopColor="#a9c3f5" />
              <stop offset="1" stopColor="#dde7fb" />
            </linearGradient>
          </defs>
          <path fill="url(#sky)" d="M5 15.500A4.600 4.600 0 0 1 4.600 6.500A7 7 0 0 1 17.500 5.500A5 5 0 0 1 18 15.500Z" />
        </svg>
        <span>-11°C<br />Cloudy</span>
      </Weather>
      <StartButton aria-label="Start">
        <svg width="23" height="22" viewBox="0 0 23 22">
          <defs>
            <linearGradient id="win" x1="0" y1="0" x2="1" y2="1">
              <stop offset="0" stopColor="#6fe0fb" />
              <stop offset="1" stopColor="#1b9af0" />
            </linearGradient>
          </defs>
          <path fill="url(#win)" d="M0 0H11V10.500H0ZM12 0H23V10.500H12ZM0 11.500H11V22H0ZM12 11.500H23V22H12Z" />
        </svg>
      </StartButton>
      <SearchBox>
        <svg width="15" height="15" viewBox="0 0 15 15" fill="none" stroke="#eee" strokeWidth="1.600" aria-hidden="true">
          <circle cx="6" cy="6" r="5" />
          <path d="M9.700 9.700 14 14" />
        </svg>
        <input type="search" aria-label="Search" placeholder="Search" />
      </SearchBox>
      <AppButton aria-label="Task view">
        <svg width="23" height="21" viewBox="0 0 23 21">
          <rect x="6" y="0" width="17" height="15" fill="#ececec" />
          <rect x="0" y="6" width="17" height="15" fill="#7c7c7c" fillOpacity=".85" />
        </svg>
      </AppButton>
      <AppButton aria-label="Store">
        <svg width="22" height="23" viewBox="0 0 22 23">
          <path d="M6 5V2.500A1.500 1.500 0 0 1 7.500 1H14.500A1.500 1.500 0 0 1 16 2.500V5" fill="none" stroke="#35a8e0" strokeWidth="2" />
          <path d="M0 5H22V20A3 3 0 0 1 19 23H3A3 3 0 0 1 0 20Z" fill="#f2f2f2" />
          <rect x="7" y="9" width="4" height="4" fill="#e2512c" />
          <rect x="12" y="9" width="4" height="4" fill="#6bab2a" />
          <rect x="7" y="14" width="4" height="4" fill="#2a93d5" />
          <rect x="12" y="14" width="4" height="4" fill="#f0b32a" />
        </svg>
      </AppButton>
      <AppButton aria-label="Copilot">
        <svg width="23" height="21" viewBox="0 0 23 21">
          <defs>
            <linearGradient id="cpa" x1="0" y1="0" x2="0" y2="1">
              <stop offset="0" stopColor="#2a8be8" />
              <stop offset=".5" stopColor="#35b7a2" />
              <stop offset="1" stopColor="#e9c63c" />
            </linearGradient>
            <linearGradient id="cpb" x1="0" y1="0" x2="0" y2="1">
              <stop offset="0" stopColor="#a05cf0" />
              <stop offset=".6" stopColor="#ee5f92" />
              <stop offset="1" stopColor="#f79a4a" />
            </linearGradient>
          </defs>
          <path fill="#2348b8" d="M11 1H15Q17 1 17.500 3L18.500 6H12Z" />
          <path fill="#e8603c" d="M5 15H11L12 20H8.500Q6.500 20 6 18Z" />
          <path fill="url(#cpa)" d="M6 1H14L10.500 13Q10 16 8 16H3Q-.5 16 .5 12L3 3.500Q3.700 1 6 1Z" />
          <path fill="url(#cpb)" d="M15 5H20Q23.500 5 22.500 9L20 17.500Q19.300 20 17 20H9L12.500 8Q13 5 15 5Z" />
          <path fill="#202020" d="M10.800 7.500H12.700L11.400 13.500H9.500Z" />
        </svg>
      </AppButton>
      <AppButton aria-label="Document">
        <svg width="17" height="21" viewBox="0 0 17 21">
          <path d="M0 0H11L17 6V21H0Z" fill="#f3f3f3" />
          <path d="M11.500 .5V5.500H16.500" fill="none" stroke="#8d8d8d" />
        </svg>
      </AppButton>
      <AppButton aria-label="Acrobat Reader"><PdfGlyph size={20} /></AppButton>
      <AppButton aria-label="Maps">
        <svg width="22" height="22" viewBox="0 0 22 22">
          <circle cx="11" cy="11" r="11" fill="#f5f5f5" />
          <path d="M11 19C10.500 15 6 13 6 8.500A5 5 0 0 1 7 5.500L14.500 12C13 14 11.500 16 11 19Z" fill="#34a853" />
          <path d="M7 5.500A5 5 0 0 1 10 3.600L12 6 8.500 10 6 8.500Z" fill="#ea4335" />
          <path d="M10 3.600A5 5 0 0 1 15.500 6.300L12 9Z" fill="#4285f4" />
          <path d="M15.500 6.300C16.500 9 15.500 11 14 12.500L12.500 9.500 10 12 8 11.500Z" fill="#fbbc04" />
          <circle cx="11" cy="8.500" r="1.900" fill="#f5f5f5" />
        </svg>
      </AppButton>
      <AppButton aria-label="Chrome"><ChromeLogo /></AppButton>
      <AppButton aria-label="YouTube">
        <svg width="23" height="16" viewBox="0 0 23 16">
          <rect width="23" height="16" rx="3.500" fill="#e90008" />
          <path d="M9 4.500 15 8 9 11.500Z" fill="#fff" />
        </svg>
      </AppButton>
      <AppButton $open aria-label="Chrome, profile S">
        <ChromeLogo />
        <ProfileDot>S</ProfileDot>
        <AppMark $w={15} $c="#5fb8ee" />
      </AppButton>
      <AppButton aria-label="Snipping tool">
        <svg width="24" height="24" viewBox="0 0 24 24">
          <rect x="0" y="1" width="18" height="18" rx="2" fill="#f3f3f3" />
          <path d="M3.500 15V4.500H15" fill="none" stroke="#c4262e" strokeWidth="2.200" strokeDasharray="2.200 1.500" />
          <path d="M7 7.500H15V15" fill="none" stroke="#8b8b8b" strokeWidth="1.200" />
          <path d="M14 8V19M9 14H20" stroke="#777" strokeWidth="1.500" />
          <circle cx="13.500" cy="21" r="2.200" fill="none" stroke="#2aa3dd" strokeWidth="1.600" />
          <circle cx="21" cy="13.500" r="2.200" fill="none" stroke="#2aa3dd" strokeWidth="1.600" />
        </svg>
      </AppButton>
      <AppButton aria-label="Recorder">
        <svg width="23" height="23" viewBox="0 0 24 24">
          <circle cx="12" cy="12" r="11" fill="#262626" stroke="#bdbdbd" strokeWidth="1.300" />
          <g fill="#111" stroke="#a5a5a5">
            {[0, 120, 240].map((a) => (
              <path key={a} transform={`rotate(${a} 12 12)`} d="M12 12C7 11 6.500 5.500 11.500 3.500C15.500 4.500 15 10 12 12Z" />
            ))}
          </g>
        </svg>
        <AlertDot />
        <AppMark $w={5} $c="#a8a8a8" />
      </AppButton>
      <Grow />
      <TrayButton $w={30} aria-label="Hidden icons">
        <Icon><path strokeWidth="1.800" d="M-4.500 2.500 0 -2 4.500 2.500" /></Icon>
      </TrayButton>
      <TrayButton $w={31} aria-label="Sync">
        <Icon>
          <path
            strokeWidth="1.500"
            d="M-6.500 -1A6.500 6.500 0 0 1 6 -3M6.500 -6.500V-2.500H2.500M-3 6.500A6.500 6.500 0 0 1 -6 3M-6.500 6.500V2.500H-2.500"
          />
          <circle cx="3.500" cy="4" r="4.200" fill="#ee9a1c" stroke="none" />
        </Icon>
      </TrayButton>
      <TrayButton $w={28} aria-label="Microphone">
        <Icon>
          <rect x="-2.200" y="-7" width="4.400" height="9" rx="2.200" fill="#36687a" stroke="#8fd2ea" />
          <path stroke="#8fd2ea" d="M-5 -1V0A5 5 0 0 0 5 0V-1M0 5V8" />
        </Icon>
      </TrayButton>
      <TrayButton $w={44}><span>ENG</span><span>US</span></TrayButton>
      <TrayButton $w={26} aria-label="Wi-Fi">
        <Icon size={24}>
          <path
            strokeWidth="1.600"
            d="M-7 -2A10 10 0 0 1 7 -2M-4.700 .8A6.500 6.500 0 0 1 4.700 .8M-2.400 3.500A3.500 3.500 0 0 1 2.400 3.500"
          />
          <circle cy="5.500" r="1.500" fill="currentColor" stroke="none" />
        </Icon>
      </TrayButton>
      <TrayButton $w={20} aria-label="Volume">
        <Icon size={24}>
          <path strokeWidth="1.500" d="M-7 -2.500H-4L0 -6V6L-4 2.500H-7ZM2.500 -2.500A4 4 0 0 1 2.500 2.500" />
          <path stroke="#666" d="M5 -5A7.500 7.500 0 0 1 5 5" />
        </Icon>
      </TrayButton>
      <TrayButton $w={30} aria-label="Battery">
        <Icon>
          <rect x="-9.500" y="-4.500" width="17" height="9.500" rx="2.500" />
          <rect x="-7.500" y="-2.500" width="8.500" height="5.500" rx="1" fill="#8ee08f" stroke="none" />
          <path d="M9.500 -1.500V2" strokeWidth="1.600" />
          <path d="M-.5 -7.500 -3.500 -1H.5L-.5 3 3 -3.500H-.5Z" fill="#fff" stroke="#202020" strokeWidth=".8" />
        </Icon>
      </TrayButton>
      <TrayButton $w={62} $right><span>8:24 AM</span><span>3/25/2026</span></TrayButton>
    </Taskbar>
  );
}

export default function App() {
  return (
    <>
      <Global />
      <Shell>
        <BrowserTabs />
        <AddressBar />
        <ChartToolbar />
        <Workspace>
          <DrawingRail />
          <ChartArea />
          <WidgetRail />
        </Workspace>
        <DesktopBar />
      </Shell>
    </>
  );
}
